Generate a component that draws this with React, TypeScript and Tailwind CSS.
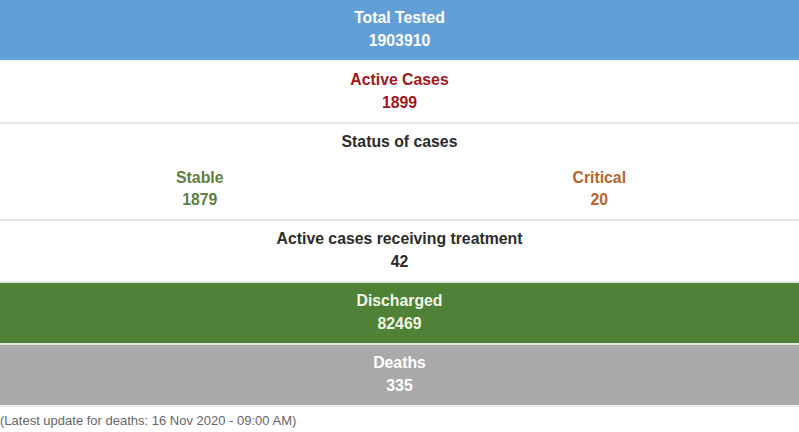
const font = { fontFamily: '"Liberation Sans", Arial, sans-serif' };

function Stat({
  label,
  value,
  className,
}: {
  label: string;
  value: string | number;
  className: string;
}) {
  return (
    <div className={`flex h-[60px] flex-col items-center pt-[6px] text-[15.8px] font-bold leading-[23px] ${className}`}>
      <span>{label}</span>
      <span>{value}</span>
    </div>
  );
}

export default function App() {
  return (
    <div className="w-[799px] bg-white" style={font}>
      <div className="border-b-2 border-[#f3f6fa]">
        <Stat label="Total Tested" value={1903910} className="bg-[#629fd6] text-white" />
      </div>
      <div className="border-b-2 border-[#e4e4e4]">
        <Stat label="Active Cases" value={1899} className="text-[#a4161a]" />
      </div>
      <div className="flex h-[97px] flex-col border-b-2 border-[#e4e4e4] pt-[6px] text-[15.8px] font-bold leading-[23px]">
        <div className="text-center text-[#2b2b2b]">Status of cases</div>
        <div className="mt-[14px] grid grid-cols-2 leading-[22px]">
          <div className="flex flex-col items-center text-[#5b7f40]">
            <span>Stable</span>
            <span>1879</span>
          </div>
          <div className="flex flex-col items-center text-[#b8622d]">
            <span>Critical</span>
            <span>20</span>
          </div>
        </div>
      </div>
      <div className="border-b-2 border-[#e4e4e4]">
        <Stat label="Active cases receiving treatment" value={42} className="text-[#2b2b2b]" />
      </div>
      <div className="border-b-2 border-[#dfe9d8]">
        <Stat label="Discharged" value={82469} className="bg-[#4f8136] text-[#f1f7e8]" />
      </div>
      <div className="border-b-2 border-[#ececec]">
        <Stat label="Deaths" value={335} className="bg-[#aaa8ab] text-white" />
      </div>
      <div className="pt-[5px] text-[13px] leading-[17px] text-[#666666]">
        (Latest update for deaths: 16 Nov 2020 - 09:00 AM)
      </div>
    </div>
  );
}
